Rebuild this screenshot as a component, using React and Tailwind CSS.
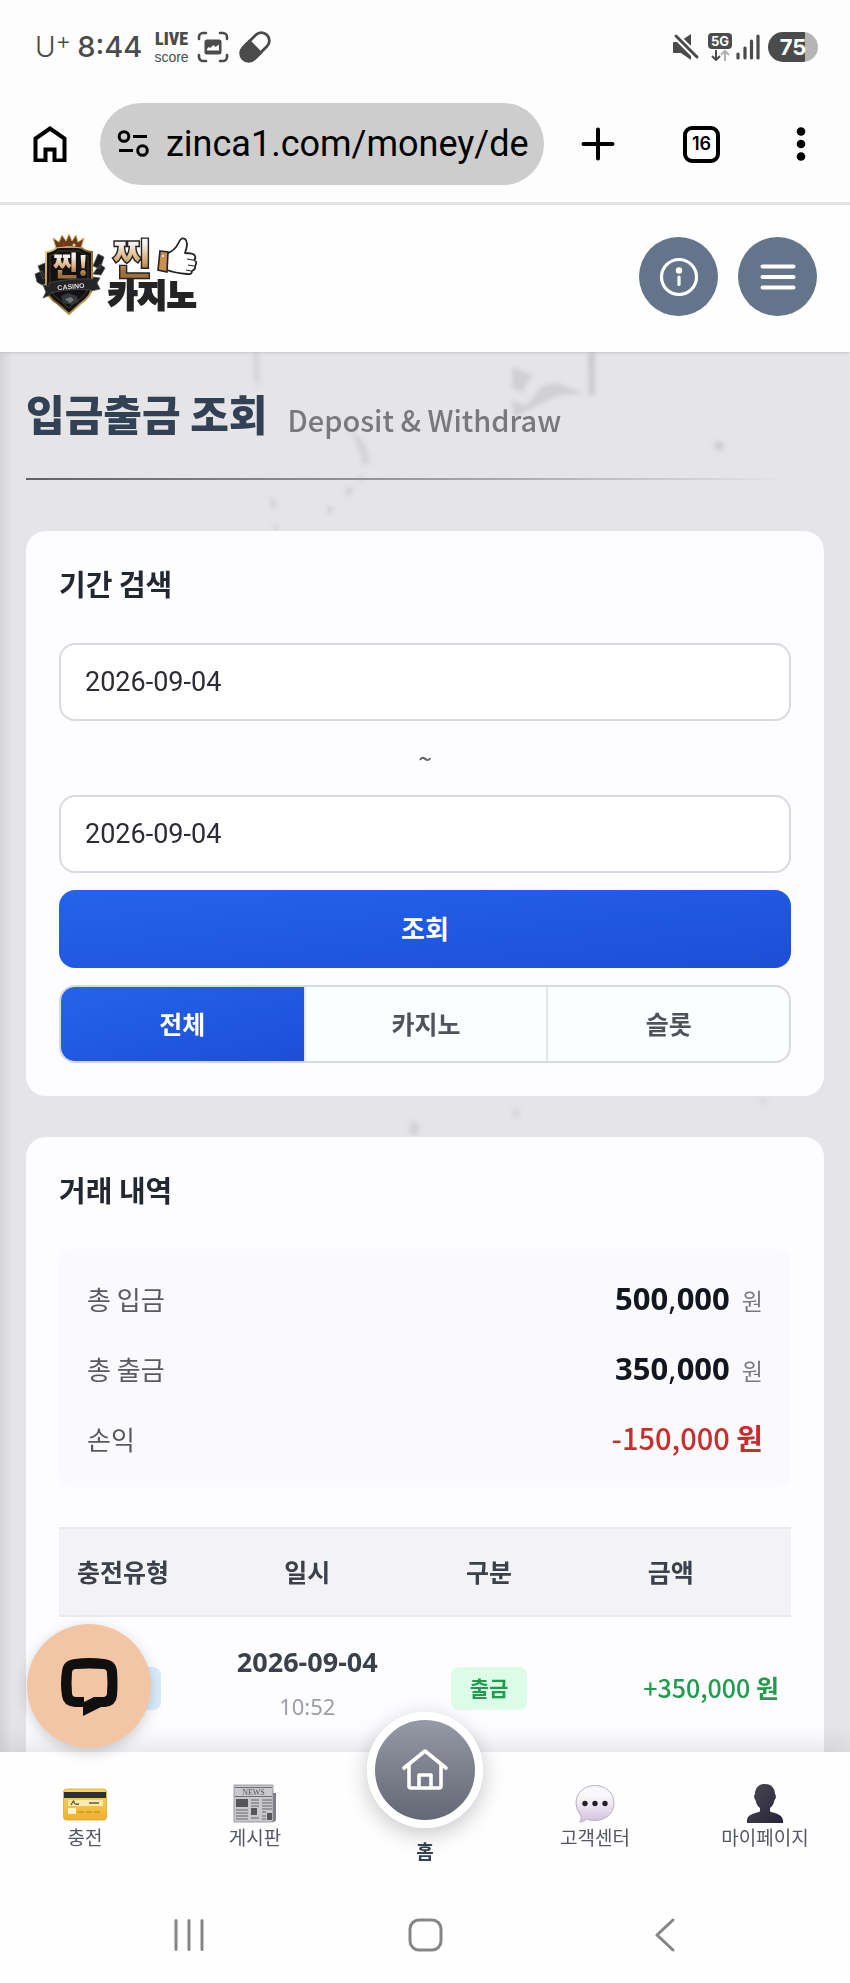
import React, { useState } from "react";

const kr = "font-['Noto_Sans_CJK_KR',sans-serif]";

function StatusBar() {
  return (
    <div className="flex h-[94px] items-center justify-between pl-[35px] pr-8 text-[#4b4b4b]">
      <div className="flex items-center">
        <span className="flex items-start font-['Inter',sans-serif] text-[28px] font-light leading-8">
          U<span className="text-[24px] leading-5">+</span>
        </span>
        <span className="ml-[6px] font-['Inter',sans-serif] text-[29px] font-medium leading-9">8:44</span>
        <span className="ml-3 flex flex-col items-center">
          <span className="font-['Roboto_Condensed','Liberation_Sans_Narrow','Liberation_Sans',sans-serif] text-[18px] font-black leading-5">LIVE</span>
          <span className="font-['Liberation_Sans',sans-serif] text-[14px] leading-4">score</span>
        </span>
        <svg className="ml-2 h-8 w-8" viewBox="0 0 32 32" fill="none" stroke="currentColor" strokeWidth="2.6" strokeLinecap="round">
          <path d="M2 8V6a4 4 0 0 1 4-4h3M23 2h3a4 4 0 0 1 4 4v2M30 24v2a4 4 0 0 1-4 4h-3M9 30H6a4 4 0 0 1-4-4v-2" />
          <path fillRule="evenodd" fill="currentColor" stroke="none" d="M10 8.500h12a2.500 2.500 0 0 1 2.500 2.500v10a2.500 2.500 0 0 1-2.500 2.500H10A2.500 2.500 0 0 1 7.500 21V11A2.500 2.500 0 0 1 10 8.500Zm0 11h12v-6l-3.500 2.500-2-2-3.500 3-1.500-1L10 18Z" />
        </svg>
        <svg className="ml-[10px] h-8 w-8" viewBox="2 2 32 32">
          <g transform="rotate(-45 18 18)" fill="none" stroke="#4b4b4b" strokeWidth="2.800">
            <rect x="1" y="10" width="34" height="16" rx="8" />
            <path fill="#4b4b4b" d="M18 10h-8a8 8 0 0 0 0 16h8z" />
          </g>
        </svg>
      </div>
      <div className="flex items-center">
        <svg className="h-7 w-7" viewBox="0 0 28 28" fill="#4b4b4b">
          <path d="M2 9h5l12-8v26l-10-7H2a1 1 0 0 1-1-1v-9a1 1 0 0 1 1-1Z" />
          <path d="M3 2l23 23" stroke="#fdfdfd" strokeWidth="7" />
          <path d="M4 3l21 21" stroke="#4b4b4b" strokeWidth="3" strokeLinecap="round" />
        </svg>
        <span className="ml-1 flex w-7 flex-col items-center pl-1">
          <span className="rounded bg-[#4b4b4b] px-[3px] font-['Inter',sans-serif] text-[13px] font-bold leading-4 text-white">5G</span>
          <svg className="h-3 w-5" viewBox="0 0 20 12" fill="none" strokeWidth="2">
            <path stroke="#4b4b4b" d="M6 1v10M2 7l4 4 4-4" />
            <path stroke="#b0b0b0" d="M15 12V2M11 6l4-4 4 4" />
          </svg>
        </span>
        <svg className="ml-1 h-7 w-6" viewBox="0 0 24 28" stroke="#4b4b4b" strokeWidth="3.200" strokeLinecap="round">
          <path d="M2 25v-4M9 25V15M15.500 25V8" />
          <path d="M22 25V3" />
        </svg>
        <span className="ml-2 flex h-[30px] w-[50px] items-center justify-center rounded-full bg-linear-to-r from-[#4b4b4b] from-75% to-[#b5b5b5] to-75% font-['Inter',sans-serif] text-[22px] font-bold text-white">75</span>
      </div>
    </div>
  );
}

function BrowserBar() {
  return (
    <div className="flex h-[111px] items-center border-b-[3px] border-[#e4e4e6] pb-2 text-black">
      <button aria-label="홈페이지" className="ml-8 shrink-0">
        <svg className="h-9 w-9" viewBox="0 0 36 36" fill="none" stroke="#000" strokeWidth="4">
          <path d="M3.500 34.500V12.500L18 2.500l14.500 10v22H22.500V23.500h-9v11Z" />
        </svg>
      </button>
      <label className="ml-8 flex h-[82px] min-w-0 flex-1 items-center rounded-full bg-[#cdcdcd] pl-[17px] pr-4">
        <svg className="h-7 w-8 shrink-0" viewBox="0 0 32 28" fill="none" stroke="#000" strokeWidth="3">
          <circle cx="7" cy="6.500" r="4.800" />
          <path d="M16 6.500h14M2 20.500h14" />
          <circle cx="25.500" cy="20.500" r="4.800" />
        </svg>
        <input aria-label="주소" defaultValue="zinca1.com/money/de" className="ml-[17px] w-full min-w-0 bg-transparent font-['Roboto',sans-serif] text-[36px] outline-none" />
      </label>
      <button aria-label="새 탭" className="ml-9 shrink-0">
        <svg className="h-9 w-9" viewBox="0 0 36 36" stroke="#000" strokeWidth="4" strokeLinecap="round"><path d="M18 3.500v29M3.500 18h29" /></svg>
      </button>
      <button aria-label="탭" className="ml-[67px] flex h-[37px] w-[37px] shrink-0 items-center justify-center rounded-[9px] border-4 border-black font-['Inter',sans-serif] text-[18px] font-semibold leading-none">16</button>
      <button aria-label="메뉴" className="ml-[72px] mr-10 shrink-0">
        <svg className="h-9 w-[18px]" viewBox="0 0 18 36"><circle cx="9" cy="5.500" r="4.300" /><circle cx="9" cy="18" r="4.300" /><circle cx="9" cy="30.500" r="4.300" /></svg>
      </button>
    </div>
  );
}

function Logo() {
  return (
    <svg className="h-[84px] w-[170px] overflow-visible" viewBox="0 0 170 84" role="img" aria-label="찐카지노">
      <defs>
        <linearGradient id="gold" x1="0" y1="0" x2="0" y2="1">
          <stop offset="0.300" stopColor="#f6f2ee" />
          <stop offset="0.550" stopColor="#dcae78" />
          <stop offset="0.750" stopColor="#9a713f" />
        </linearGradient>
        <linearGradient id="rim" x1="0" y1="0" x2="1" y2="1">
          <stop offset="0" stopColor="#f0d68a" />
          <stop offset="0.500" stopColor="#7d5f25" />
          <stop offset="1" stopColor="#e3bf66" />
        </linearGradient>
      </defs>
      <g fill="#1d1d1f" stroke="#55565a" strokeWidth="0.800">
        <path d="M5 33l7-3 6 12-8 4zM2 41l7-3 6 12-6 2-5-3zM65 21l6 3-4 12-7-3zM67 31l5 4-4 7-8-1z" />
      </g>
      <path d="M13 19q8-1 11-5h24q3 4 11 5v35q0 9-12 17l-11 10-11-10Q13 63 13 54Z" fill="#121214" stroke="url(#rim)" strokeWidth="2" />
      <path d="M17 23q7-2 9-5h20q3 3 9 5v30q0 8-10 14l-9 8-9-8q-10-6-10-14Z" fill="none" stroke="#5d4a24" strokeWidth="0.700" />
      <path d="M23 15L20 5l6 4 3-7 4 6 3-7 3 7 4-6 2 7 6-4-3 10q-12-3-25 0Z" fill="#6b3c1c" stroke="#d9ae68" strokeWidth="1" />
      <circle cx="31" cy="12" r="1.500" fill="#b02a24" /><circle cx="41" cy="12" r="1.500" fill="#e8cf94" />
      <text x="20" y="43" fontFamily="'Noto Sans CJK KR',sans-serif" fontWeight="900" fontSize="27" fill="url(#gold)">찐!</text>
      <path d="M10 52l6 1v-3q20-5 44-4v-2l7 1-3 5 3 6-9 2v-1q-21-2-41 3v2l-7 3 3-6Z" fill="#242427" stroke="#4b4b4f" strokeWidth="0.800" />
      <text x="38" y="56" textAnchor="middle" transform="rotate(-5 38 54)" fontFamily="'Liberation Sans',sans-serif" fontWeight="700" fontSize="7" fill="#dedede">CASINO</text>
      <path d="M28 63l7-3 9 3 2 6-7 3-9-2Z" fill="#35353d" />
      <path d="M32 66l6-2 3 3-4 3Z" fill="#77777f" />
      <text x="79" y="42" fontFamily="'Noto Sans CJK KR',sans-serif" fontWeight="900" fontSize="43" fill="url(#gold)" stroke="#232325" strokeWidth="1.400">찐</text>
      <path d="M133 21q9-3 13-12 2-5 6-3 4 3 0 14 9 0 10 3 1 3-1 4 4 2 1 6 1 3-3 5 0 4-5 3-12-1-20-4Z" fill="#fff" stroke="#232325" strokeWidth="1.800" strokeLinejoin="round" />
      <path d="M160 27l-6-1M161 33l-6-1M158 38l-5-1" stroke="#232325" strokeWidth="1.200" />
      <path d="M127 18l8 1-1 20-9-2Z" fill="#c88f56" stroke="#232325" strokeWidth="1.600" />
      <circle cx="130" cy="23" r="1" fill="#fff" />
      <text x="75" y="74" fontFamily="'Noto Sans CJK KR',sans-serif" fontWeight="900" fontSize="32" fill="#242426" stroke="#242426" strokeWidth="1.800">카지노</text>
    </svg>
  );
}

function SiteHeader() {
  return (
    <header className="relative z-10 flex h-[147px] items-center justify-between bg-[#fefefe] pl-[33px] pr-[33px] shadow-sm">
      <a href="#home" className="-mt-2"><Logo /></a>
      <div className="flex gap-5 pb-1">
        <button aria-label="안내" className="flex h-[79px] w-[79px] items-center justify-center rounded-full bg-[#64748b]">
          <svg className="h-10 w-10" viewBox="0 0 40 40" fill="none" stroke="#fff" strokeWidth="3.200" strokeLinecap="round">
            <circle cx="20" cy="20" r="17.500" />
            <path d="M20 20v7.500" />
            <circle cx="20" cy="13.500" r="3.200" fill="#fff" stroke="none" />
          </svg>
        </button>
        <button aria-label="전체 메뉴" className="flex h-[79px] w-[79px] items-center justify-center rounded-full bg-[#64748b]">
          <svg className="h-10 w-10" viewBox="0 0 40 40" stroke="#fff" strokeWidth="4" strokeLinecap="round">
            <path d="M4.500 9.500h31M4.500 20h31M4.500 30.500h31" />
          </svg>
        </button>
      </div>
    </header>
  );
}

function MarbleTexture() {
  return (
    <svg className="pointer-events-none absolute inset-x-0 top-0 h-[800px] w-full" viewBox="0 0 850 800" preserveAspectRatio="none" aria-hidden="true">
      <defs>
        <filter id="soft"><feGaussianBlur stdDeviation="2.200" /></filter>
      </defs>
      <g filter="url(#soft)" fill="#c6c4c9">
        <path d="M588 0h7v43h-6z" opacity="0.800" />
        <path d="M512 15l20 8-10 17-10-4zM512 48l14 6 16-20 14-3 28 10-28 3-20 10-22 12z" opacity="0.650" />
        <path d="M350 78q18 10 20 33l-8 2q-2-18-12-35zM254 0h5v38l-5-12z" opacity="0.500" />
        <circle cx="719" cy="94" r="5" opacity="0.700" />
        <path d="M347 134l7 4-8 8zM327 152l7 7-6 2zM271 143l6 10-5 4zM273 172l6 4-4 4zM360 122l4 6-5 2z" opacity="0.700" />
        <path d="M411 769l8 3-2 13-8-4z" opacity="0.600" />
        <circle cx="516" cy="761" r="4" opacity="0.400" />
        <circle cx="763" cy="750" r="4" opacity="0.300" />
      </g>
    </svg>
  );
}

function SearchCard() {
  const [tab, setTab] = useState("전체");
  const input = "h-[78px] w-full rounded-2xl border-2 border-[#d9dade] bg-white px-6 font-['Roboto',sans-serif] text-[27px] text-[#2b2d33] outline-none";
  return (
    <section className="rounded-[20px] bg-[#fdfdff] px-[33px] py-[33px]">
      <h2 className="text-[29px] font-bold leading-[39px] text-[#232731]">기간 검색</h2>
      <input aria-label="시작일" defaultValue="2026-09-04" className={"mt-10 " + input} />
      <div className="flex h-[74px] items-center justify-center text-[24px] font-medium text-[#666]">~</div>
      <input aria-label="종료일" defaultValue="2026-09-04" className={input} />
      <button className="mt-[17px] h-[78px] w-full rounded-2xl bg-linear-to-br from-[#2563eb] to-[#1d4ed8] pb-1 text-[26px] font-bold text-white">조회</button>
      <div className="mt-[17px] grid h-[78px] grid-cols-3 overflow-hidden rounded-2xl border-2 border-[#d9dade] bg-[#fcfdfe] text-[25px] font-bold text-[#4f535c]">
        {["전체", "카지노", "슬롯"].map((name) => (
          <button
            key={name}
            onClick={() => setTab(name)}
            className={tab === name ? "bg-linear-to-br from-[#2563eb] to-[#1d4ed8] text-white" : "border-l-2 border-[#e5e6ea]"}
          >
            {name}
          </button>
        ))}
      </div>
    </section>
  );
}

function SummaryRow({ label, value }) {
  const parts = value.split(",");
  return (
    <div className="flex h-[70px] items-center justify-between">
      <dt className="text-[26px] text-[#585a5f]">{label}</dt>
      <dd className="flex items-baseline gap-3">
        <span className="font-['Noto_Sans',sans-serif] text-[31px] font-bold text-[#13161f]">
          {parts[0]}<span className="font-normal">,</span>{parts[1]}
        </span>
        <span className="text-[23px] text-[#77797e]">원</span>
      </dd>
    </div>
  );
}

function HistoryCard() {
  return (
    <section className="mt-[41px] rounded-t-[20px] bg-[#fdfdff] px-[33px] pt-[33px]">
      <h2 className="text-[29px] font-bold leading-[39px] text-[#232731]">거래 내역</h2>
      <dl className="mt-10 rounded-xl bg-[#fafafd] px-7 py-[14px]">
        <SummaryRow label="총 입금" value="500,000" />
        <SummaryRow label="총 출금" value="350,000" />
        <div className="flex h-[70px] items-center justify-between">
          <dt className="text-[26px] text-[#585a5f]">손익</dt>
          <dd className="text-[29px] font-medium text-[#c92d2d]">-150,000 <b>원</b></dd>
        </div>
      </dl>
      <table className="mt-10 w-full table-fixed border-collapse">
        <thead>
          <tr className="h-[88px] border-y-2 border-[#e9e9ee] bg-[#f3f3f7] text-[25px] text-[#3c404b]">
            <th className="w-32">충전유형</th>
            <th>일시</th>
            <th className="w-[123px]">구분</th>
            <th>금액</th>
          </tr>
        </thead>
        <tbody>
          <tr className="h-[143px] text-center">
            <td><span className="inline-block h-[43px] w-[76px] rounded-lg bg-[#d9ecfd] align-middle" /></td>
            <td className="pb-2">
              <div className="font-['Noto_Sans',sans-serif] text-[27px] font-bold leading-9 text-[#3c404b]">2026-09-04</div>
              <div className="mt-2 font-['Noto_Sans',sans-serif] text-[22px] leading-9 text-[#9a9ea6]">10:52</div>
            </td>
            <td><span className="inline-flex h-[43px] w-[76px] items-center justify-center rounded-lg bg-[#dcfce7] align-middle text-[21px] font-bold text-[#1f9d4d]">출금</span></td>
            <td className="pr-3 text-right text-[25px] font-medium text-[#1f9d4d]">+350,000 <b>원</b></td>
          </tr>
        </tbody>
      </table>
    </section>
  );
}

function CardIcon() {
  return (
    <svg className="h-10 w-11" viewBox="0 0 44 40">
      <defs><linearGradient id="cardFill" x1="0" y1="0" x2="0" y2="1"><stop offset="0" stopColor="#fbd65a" /><stop offset="1" stopColor="#eeb02c" /></linearGradient></defs>
      <rect x="0.500" y="5" width="43" height="31" rx="3" fill="url(#cardFill)" stroke="#dca438" strokeWidth="0.800" />
      <path d="M1 8h42v6H1z" fill="#2f2f31" />
      <path d="M5 16h35v6H5z" fill="#fbe9b5" />
      <path d="M8 21q3-6 3-3t5 2M26 19h10" fill="none" stroke="#6a5a35" strokeWidth="1.300" />
      <rect x="5" y="24" width="8" height="6" rx="1" fill="#fff3c9" />
      <path d="M15 28h24" stroke="#c99335" strokeWidth="1.500" strokeDasharray="6 2" />
    </svg>
  );
}

function NewsIcon() {
  return (
    <svg className="h-10 w-11" viewBox="0 0 44 40">
      <path d="M37 9h6v26q0 3-3 3h-3z" fill="#7d7d82" />
      <path d="M1 1h39v37H1z" fill="#c9c9cd" stroke="#8c8c90" strokeWidth="0.800" />
      <path d="M2 3.500h37M2 12.500h37" stroke="#6f6f74" strokeWidth="1" />
      <text x="20.500" y="10.500" textAnchor="middle" fontFamily="'Liberation Serif',serif" fontSize="8" fill="#55555a">NEWS</text>
      <path d="M3 15h12v8H3zM18 24h6v7h-6zM34 29h5v7h-5z" fill="#56565b" />
      <path d="M18 16h8M18 19h8M18 22h8M29 16h10M29 19h10M29 22h10M29 25h10M3 26h12M3 29h12M3 32h12M3 35h12M18 34h8M29 28h4M29 32h4M29 35h4" stroke="#85858a" strokeWidth="1.400" />
    </svg>
  );
}

function SpeechIcon() {
  return (
    <svg className="h-10 w-10" viewBox="0 0 40 40">
      <defs><linearGradient id="speech" x1="0" y1="0" x2="0" y2="1"><stop offset="0.300" stopColor="#f8f7f9" /><stop offset="1" stopColor="#d3c0df" /></linearGradient></defs>
      <path d="M20 1.500C30.500 1.500 39 8.500 39 19s-8.500 17.500-19 17.500c-3 0-6-.5-8.500-1.500-1.500 2-4 3-7 3 2-2 2-5 1-7Q1 26 1 19C1 8.500 9.500 1.500 20 1.500Z" fill="url(#speech)" stroke="#b9afc1" />
      <g fill="#222"><circle cx="10" cy="19.500" r="2.700" /><circle cx="20" cy="19.500" r="2.700" /><circle cx="30" cy="19.500" r="2.700" /></g>
    </svg>
  );
}

function UserIcon() {
  return (
    <svg className="h-10 w-10" viewBox="0 0 40 40">
      <defs><linearGradient id="bust" x1="0" y1="0" x2="1" y2="1"><stop offset="0" stopColor="#4a4a50" /><stop offset="1" stopColor="#26233c" /></linearGradient></defs>
      <path d="M20 0c7 0 10 5 10 10 1 1 1.500 4-.5 6-1 5-3 7-4.500 8v3c0 2 13 1.500 13 10v2H2v-2c0-8.500 13-8 13-10v-3c-1.500-1-3.500-3-4.500-8-2-2-1.500-5-.5-6C10 5 13 0 20 0Z" fill="url(#bust)" />
    </svg>
  );
}

function NavItem({ icon, label }) {
  return (
    <a href="#menu" className="flex flex-col items-center pt-8 text-[19px] leading-[26px] text-[#55585f]">
      {icon}
      <span>{label}</span>
    </a>
  );
}

function BottomNav() {
  return (
    <nav className="relative -mt-2 grid h-[138px] grid-cols-5 bg-[#fefeff] shadow-[0_-4px_28px_rgba(0,0,0,0.12)]">
      <NavItem icon={<CardIcon />} label="충전" />
      <NavItem icon={<NewsIcon />} label="게시판" />
      <a href="#home" className="-mt-10 flex flex-col items-center text-[19px] font-bold leading-[26px] text-[#334155]">
        <span className="flex h-[116px] w-[116px] items-center justify-center rounded-full border-8 border-white bg-linear-to-b from-[#949aa6] to-[#636874] shadow-[0_6px_22px_rgba(0,0,0,0.22)]">
          <svg className="h-12 w-12" viewBox="0 0 48 48" fill="none" stroke="#fff" strokeWidth="3.600" strokeLinecap="round" strokeLinejoin="round">
            <path d="M3 22L24 5l21 17M8 19v21a2 2 0 0 0 2 2h28a2 2 0 0 0 2-2V19M18 41V29h12v12" />
          </svg>
        </span>
        <span className="mt-[10px]">홈</span>
      </a>
      <NavItem icon={<SpeechIcon />} label="고객센터" />
      <NavItem icon={<UserIcon />} label="마이페이지" />
    </nav>
  );
}

function SystemNav() {
  const icon = "h-9 w-9";
  return (
    <div className="relative flex h-[93px] items-center justify-between bg-[#fefefe] px-[170px] pb-1">
      <button aria-label="최근 앱"><svg className={icon} viewBox="0 0 36 36" stroke="#858585" strokeWidth="3" strokeLinecap="round"><path d="M6 3.500v29M19 3.500v29M32 3.500v29" /></svg></button>
      <button aria-label="홈 화면"><svg className={icon} viewBox="0 0 36 36" fill="none" stroke="#858585" strokeWidth="3"><rect x="3" y="3" width="31" height="30" rx="9" /></svg></button>
      <button aria-label="뒤로"><svg className={icon} viewBox="0 0 36 36" fill="none" stroke="#858585" strokeWidth="3" strokeLinecap="round" strokeLinejoin="round"><path d="M29 3L13 18l16 15" /></svg></button>
    </div>
  );
}

export default function App() {
  return (
    <div className={"flex min-h-screen flex-col bg-[#fdfdfd] " + kr}>
      <StatusBar />
      <BrowserBar />
      <SiteHeader />
      <main className="relative flex-1 bg-linear-to-r from-[#d4d4d6] to-[#e5e4e7] to-[12px] px-[26px]">
        <MarbleTexture />
        <div className="relative">
          <div className="flex h-[126px] items-center gap-5 pb-1 text-[#334155]">
            <h1 className="text-[42px] font-black leading-none">입금출금 조회</h1>
            <p className="pt-3 text-[29px] font-medium leading-none text-[#77797f]">Deposit &amp; Withdraw</p>
          </div>
          <div className="mb-[51px] h-[2px] bg-linear-to-r from-[#626266] via-[#a9a9ad] via-60% to-transparent to-95%" />
          <SearchCard />
          <HistoryCard />
        </div>
        <button aria-label="채팅 상담" className="absolute bottom-3 left-[27px] z-20 flex h-[124px] w-[124px] items-center justify-center rounded-full bg-[#f2c6a5] shadow-[0_4px_14px_rgba(0,0,0,0.18)]">
          <svg className="h-[60px] w-[60px]" viewBox="0 0 60 60" fill="#0f0f0f">
            <path fillRule="evenodd" d="M16 3q14-2 29 0 12 1 13 12 1 14 0 25-1 10-12 11h-4L24 60V51h-8Q4 50 3 40 1 28 3 15 4 4 16 3Zm1 10q-4 0-4 4-1 10 0 20 0 4 4 4h8v5l10-5h9q4 0 4-4 1-10 0-20 0-4-4-4-13-1-27 0Z" />
          </svg>
        </button>
      </main>
      <BottomNav />
      <SystemNav />
    </div>
  );
}
